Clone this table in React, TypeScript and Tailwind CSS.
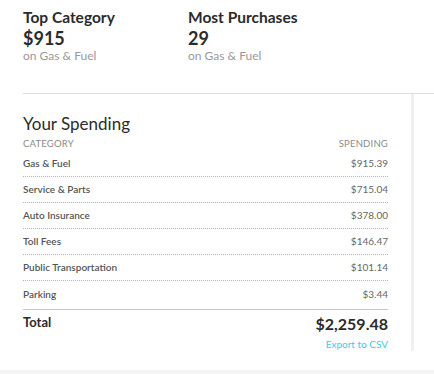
const highlights = [
  { title: 'Top Category', value: '$915', note: 'on Gas & Fuel' },
  { title: 'Most Purchases', value: '29', note: 'on Gas & Fuel' },
];

const spending = [
  { category: 'Gas & Fuel', amount: '$915.39' },
  { category: 'Service & Parts', amount: '$715.04' },
  { category: 'Auto Insurance', amount: '$378.00' },
  { category: 'Toll Fees', amount: '$146.47' },
  { category: 'Public Transportation', amount: '$101.14' },
  { category: 'Parking', amount: '$3.44' },
];

export default function App() {
  return (
    <div className="flex h-[374px] w-[434px] flex-col bg-white font-['Lato',sans-serif] text-[#333]">
      <div className="flex h-[93px] px-[23px] pt-[7px]">
        {highlights.map(({ title, value, note }) => (
          <div key={title} className="w-[165px]">
            <p className="text-[15.5px] leading-[20px] font-bold text-[#2b2b2b]">{title}</p>
            <p className="text-[18px] leading-[22px] font-bold text-[#2b2b2b]">{value}</p>
            <p className="text-[12px] leading-[14px] text-[#999]">{note}</p>
          </div>
        ))}
      </div>

      <div className="ml-[23px] flex flex-1 border-t border-[#dedede]">
        <section className="w-[365px] pt-[19px]">
          <h2 className="text-[17px] leading-[22px] text-[#2b2b2b]">Your Spending</h2>
          <div className="mt-[3px] flex justify-between text-[9.5px] leading-[12px] tracking-[0.2px] text-[#8a8a8a] uppercase">
            <span>Category</span>
            <span>Spending</span>
          </div>

          <ul className="mt-[1px]">
            {spending.map(({ category, amount }, i) => (
              <li
                key={category}
                className={`flex h-[26px] items-center justify-between text-[10px] ${
                  i < spending.length - 1 ? 'border-b border-dotted border-[#b4b4b4]' : ''
                }`}
              >
                <span className="font-semibold text-[#555]">{category}</span>
                <span className="text-[#666]">{amount}</span>
              </li>
            ))}
          </ul>

          <div className="mt-[2px] flex items-start justify-between border-t border-[#c8c8c8] pt-[4px]">
            <span className="text-[13px] leading-[16px] font-bold text-[#2b2b2b]">Total</span>
            <span className="text-[16px] leading-[20px] font-bold text-[#2b2b2b]">$2,259.48</span>
          </div>
          <div className="mt-[1px] text-right leading-[14px]">
            <a className="text-[10px] text-[#36cdec]">Export to CSV</a>
          </div>
        </section>
        <div className="ml-[23px] h-[257px] w-[3px] bg-[#f0f0f0]" />
      </div>

      <div className="h-[4px] bg-[#f4f4f4]" />
    </div>
  );
}
